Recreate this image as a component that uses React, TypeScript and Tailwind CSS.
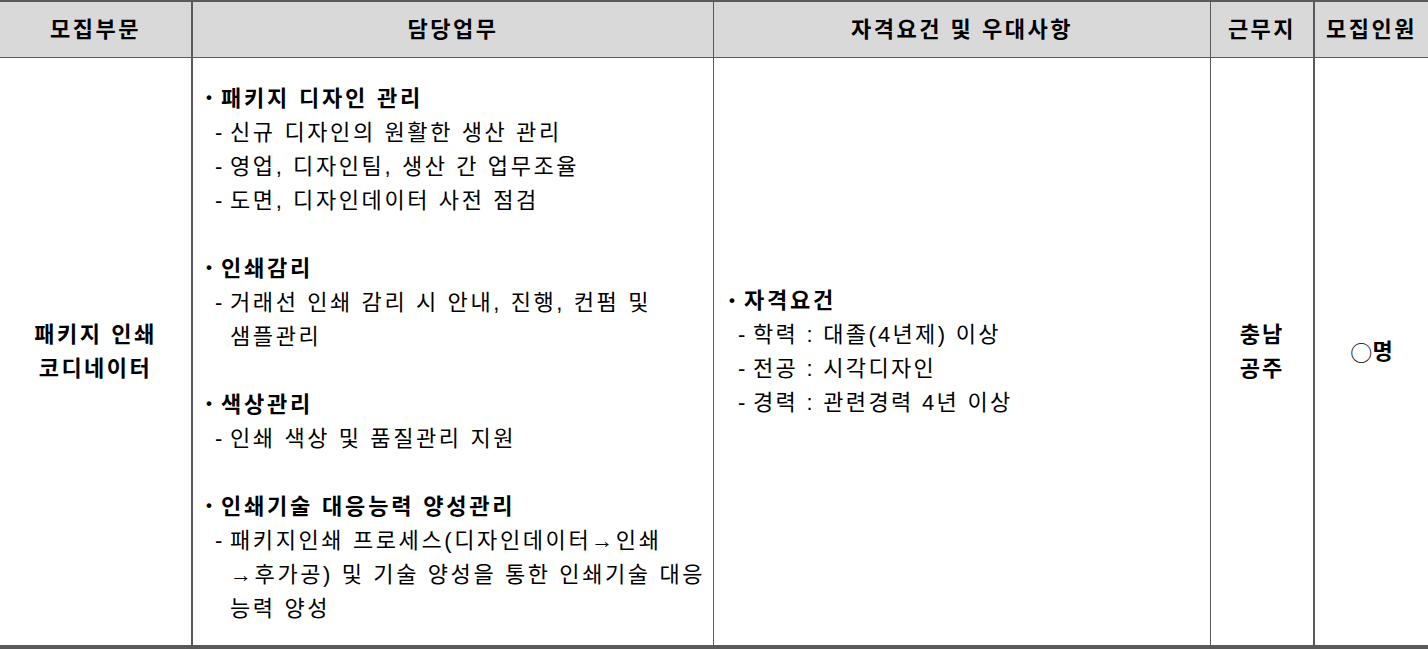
const font = { fontFamily: '"Liberation Sans", "Noto Sans CJK KR", sans-serif' };

type Group = { title: string; items: string[][] };

const duties: Group[] = [
  {
    title: "패키지 디자인 관리",
    items: [["신규 디자인의 원활한 생산 관리"], ["영업, 디자인팀, 생산 간 업무조율"], ["도면, 디자인데이터 사전 점검"]],
  },
  {
    title: "인쇄감리",
    items: [["거래선 인쇄 감리 시 안내, 진행, 컨펌 및", "샘플관리"]],
  },
  {
    title: "색상관리",
    items: [["인쇄 색상 및 품질관리 지원"]],
  },
  {
    title: "인쇄기술 대응능력 양성관리",
    items: [["패키지인쇄 프로세스(디자인데이터→인쇄", "→후가공) 및 기술 양성을 통한 인쇄기술 대응", "능력 양성"]],
  },
];

function Bullet({ title }: { title: string }) {
  return (
    <div className="flex h-[34px] items-center font-bold tracking-[2.8px]">
      <span className="w-[15px] text-[17px]">•</span>
      <span>{title}</span>
    </div>
  );
}

function Dash({ lines }: { lines: string[] }) {
  return (
    <div className="pl-[9px]">
      {lines.map((l, i) => (
        <div key={i} className="flex h-[34px] items-center whitespace-nowrap">
          <span className="w-[15px]">{i === 0 ? "-" : ""}</span>
          <span>{l}</span>
        </div>
      ))}
    </div>
  );
}

export default function App() {
  const head = "flex items-center justify-center bg-[#d9d9d9] font-bold text-[22px] tracking-[2.5px] text-black";
  return (
    <div className="w-[1428px] h-[650px] bg-white text-black" style={font}>
      <div className="grid grid-cols-[191px_522px_497px_103px_115px] border-t-2 border-b-[4px] border-[#5a5a5a]">
        <div className={`${head} h-[56px] border-b border-[#5a5a5a]`}>모집부문</div>
        <div className={`${head} h-[56px] border-b border-l-2 border-[#5a5a5a]`}>담당업무</div>
        <div className={`${head} h-[56px] border-b border-l border-[#5a5a5a]`}>자격요건 및 우대사항</div>
        <div className={`${head} h-[56px] border-b border-l border-[#5a5a5a]`}>근무지</div>
        <div className={`${head} h-[56px] border-b border-l-2 border-[#5a5a5a]`}>모집인원</div>

        <div className="flex h-[587px] flex-col items-center justify-center text-[22px] font-bold tracking-[2.5px]">
          <div className="flex h-[34px] items-center">패키지 인쇄</div>
          <div className="flex h-[34px] items-center">코디네이터</div>
        </div>

        <div className="flex flex-col border-l-2 border-[#5a5a5a] pl-[13px] pt-[23px] text-[22px] tracking-[2.6px]">
          {duties.map((g, gi) => (
            <div key={gi} className={gi > 0 ? "mt-[34px]" : ""}>
              <Bullet title={g.title} />
              {g.items.map((it, ii) => (
                <Dash key={ii} lines={it} />
              ))}
            </div>
          ))}
        </div>

        <div className="flex flex-col justify-center border-l border-[#5a5a5a] pl-[15px] text-[22px] tracking-[2.3px]">
          <Bullet title="자격요건" />
          <Dash lines={["학력 : 대졸(4년제) 이상"]} />
          <Dash lines={["전공 : 시각디자인"]} />
          <Dash lines={["경력 : 관련경력 4년 이상"]} />
        </div>

        <div className="flex flex-col items-center justify-center border-l border-[#5a5a5a] text-[22px] font-bold tracking-[2px]">
          <div className="flex h-[34px] items-center">충남</div>
          <div className="flex h-[34px] items-center">공주</div>
        </div>

        <div className="flex items-center justify-center border-l-2 border-[#5a5a5a] text-[22px] font-bold">
          <span style={{ fontFamily: '"Noto Sans CJK KR", sans-serif' }} className="font-normal">○</span>명
        </div>
      </div>
    </div>
  );
}
